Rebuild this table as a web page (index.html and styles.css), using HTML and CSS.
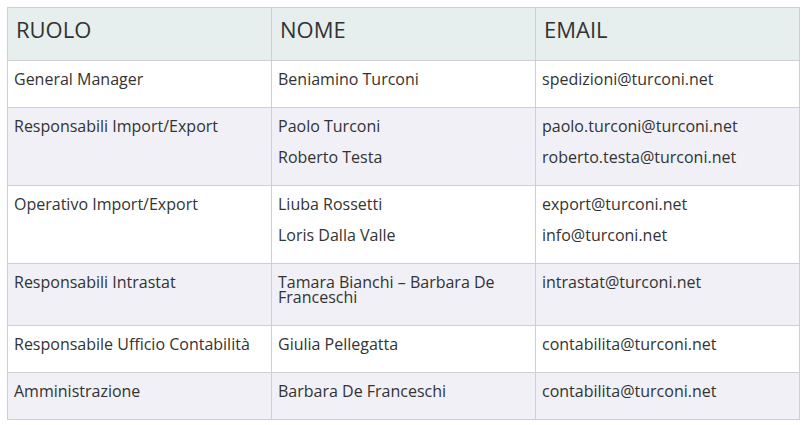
FILE: index.html
```html
<!DOCTYPE html>
<html lang="it">
<head>
<meta charset="utf-8">
<title>Contatti</title>
<link rel="stylesheet" href="styles.css">
</head>
<body>
<div class="wrap">
<table class="contacts">
  <thead>
    <tr><th>RUOLO</th><th>NOME</th><th>EMAIL</th></tr>
  </thead>
  <tbody>
    <tr>
      <td><p>General Manager</p></td>
      <td><p>Beniamino Turconi</p></td>
      <td><p>spedizioni@turconi.net</p></td>
    </tr>
    <tr class="odd">
      <td><p>Responsabili Import/Export</p></td>
      <td><p>Paolo Turconi</p><p>Roberto Testa</p></td>
      <td><p>paolo.turconi@turconi.net</p><p>roberto.testa@turconi.net</p></td>
    </tr>
    <tr>
      <td><p>Operativo Import/Export</p></td>
      <td><p>Liuba Rossetti</p><p>Loris Dalla Valle</p></td>
      <td><p>export@turconi.net</p><p>info@turconi.net</p></td>
    </tr>
    <tr class="odd">
      <td><p>Responsabili Intrastat</p></td>
      <td><p>Tamara Bianchi – Barbara De Franceschi</p></td>
      <td><p>intrastat@turconi.net</p></td>
    </tr>
    <tr>
      <td><p>Responsabile Ufficio Contabilità</p></td>
      <td><p>Giulia Pellegatta</p></td>
      <td><p>contabilita@turconi.net</p></td>
    </tr>
    <tr class="odd">
      <td><p>Amministrazione</p></td>
      <td><p>Barbara De Franceschi</p></td>
      <td><p>contabilita@turconi.net</p></td>
    </tr>
  </tbody>
</table>
</div>
</body>
</html>
```
FILE: styles.css
```css
html, body {
  margin: 0;
  padding: 0;
  background: #ffffff;
}
body {
  font-family: "Open Sans", "Liberation Sans", sans-serif;
  color: #333333;
}
.wrap {
  padding: 7px 9px 7px 7px;
}
.contacts {
  width: 793px;
  border-collapse: collapse;
  table-layout: fixed;
}
.contacts th,
.contacts td {
  border: 1px solid #cfcfcf;
  text-align: left;
  vertical-align: top;
}
.contacts th {
  background: #e6eeee;
  font-weight: 400;
  font-size: 22px;
  line-height: 24px;
  padding: 9px 7px 19px 8px;
  color: #333333;
}
.contacts td {
  font-size: 16px;
  line-height: 15px;
  padding: 11px 7px 20px 6px;
}
.contacts td p {
  margin: 0;
}
.contacts td p + p {
  margin-top: 16px;
}
.contacts tr.odd td {
  background: #f0f0f6;
}
```
